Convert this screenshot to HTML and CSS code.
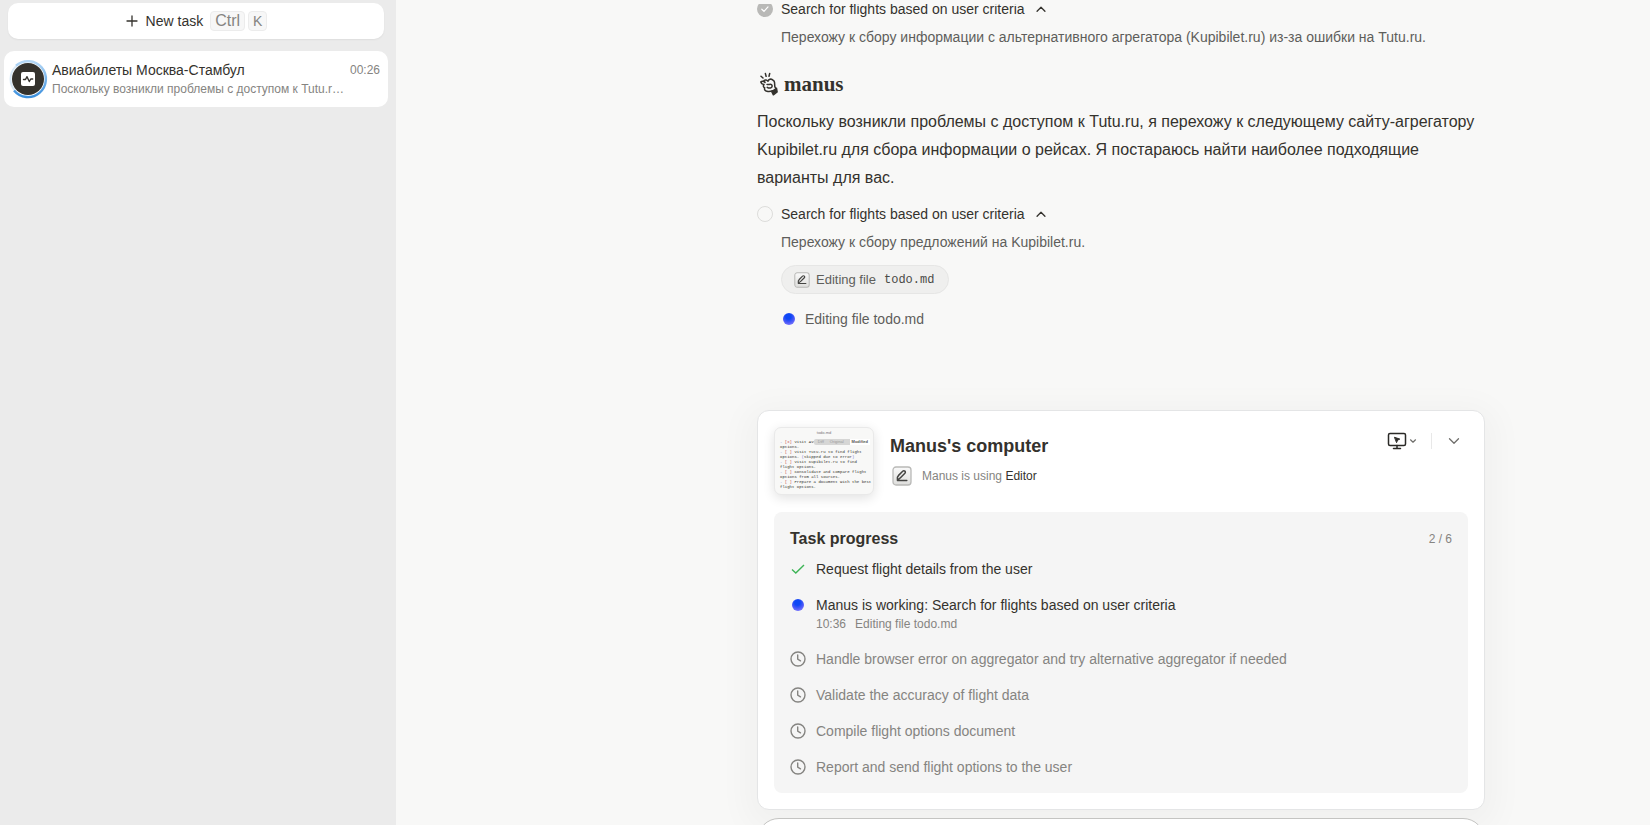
FILE: index.html
```html
<!DOCTYPE html>
<html lang="ru">
<head>
    <meta charset="UTF-8">
    <meta name="viewport" content="width=device-width, initial-scale=1.0">
    <title>Авиабилеты Москва-Стамбул - Manus</title>
    <link rel="stylesheet" href="styles.css">
</head>
<body>
    <!-- shared icons -->
    <svg class="sprite" aria-hidden="true">
        <symbol id="i-up" viewBox="0 0 16 16"><path d="M3.5 10.5 8 6l4.5 4.5" fill="none" stroke="currentColor" stroke-width="1.5" stroke-linecap="round" stroke-linejoin="round"/></symbol>
        <symbol id="i-down" viewBox="0 0 16 16"><path d="M3.5 5.8 8 10.3l4.5-4.5" fill="none" stroke="currentColor" stroke-width="1.3" stroke-linecap="round" stroke-linejoin="round"/></symbol>
        <symbol id="i-down-small" viewBox="0 0 8 8"><path d="M1.5 2.8 4 5.2l2.500-2.400" fill="none" stroke="currentColor" stroke-width="1.2" stroke-linecap="round" stroke-linejoin="round"/></symbol>
        <symbol id="i-clock" viewBox="0 0 16 16"><g fill="none" stroke="currentColor" stroke-width="1.4" stroke-linecap="round" stroke-linejoin="round"><circle cx="8" cy="8" r="7"/><path d="M7.700 4v4.200l2.800 1.600"/></g></symbol>
        <symbol id="i-edit" viewBox="0 0 20 20">
            <rect x="1" y="1" width="18" height="18" rx="3" fill="url(#edit-bg)" stroke="#b9b9b7" stroke-width="1.300"/>
            <path d="M5.400 13.600c-.5-1.800.1-3.200 1.400-4.500l3.900-3.900c.7-.7 1.600-.7 2.200-.1s.6 1.500 0 2.100l-4.200 4.300c-1 1-2.100 1.700-3.300 2.100zM5.400 14.400h9.400" fill="none" stroke="#454543" stroke-width="1.500" stroke-linecap="round" stroke-linejoin="round"/>
        </symbol>
        <linearGradient id="edit-bg" x1="0" y1="0" x2="0" y2="1"><stop offset="0" stop-color="#fafafa"/><stop offset="1" stop-color="#dededc"/></linearGradient>
    </svg>

    <div class="app">
        <aside class="sidebar">
            <button class="new-task" type="button">
                <svg width="14" height="14" viewBox="0 0 14 14"><path d="M7 2v10M2 7h10" stroke="#34322d" stroke-width="1.300" stroke-linecap="round"/></svg>
                <span>New task</span>
                <span class="keys"><kbd>Ctrl</kbd><kbd>K</kbd></span>
            </button>

            <a class="task" href="#">
                <svg class="task-avatar" viewBox="0 0 40 40">
                    <defs><linearGradient id="ring" x1="0" y1="0" x2="0" y2="1"><stop offset="0" stop-color="#b5d8f6"/><stop offset="1" stop-color="#3a8fdd"/></linearGradient></defs>
                    <circle cx="20" cy="20" r="17.500" fill="none" stroke="#d9e9f7" stroke-width="2"/>
                    <path d="M8 6.600A18 18 0 1 1 6 31.500" fill="none" stroke="url(#ring)" stroke-width="2.400"/>
                    <circle cx="20" cy="20" r="16" fill="#34322d"/>
                    <rect x="13" y="13" width="14" height="14" rx="2" fill="#fff"/>
                    <path d="M15.500 20.500h2l1.500-2.800 2.300 4.800 1.500-2.500h1.900" fill="none" stroke="#34322d" stroke-width="1.400" stroke-linecap="round" stroke-linejoin="round"/>
                </svg>
                <span class="task-body">
                    <span class="task-top"><span class="task-title">Авиабилеты Москва-Стамбул</span><time>00:26</time></span>
                    <span class="task-text">Поскольку возникли проблемы с доступом к Tutu.ru, я перехожу к следующему сайту-агрегатору</span>
                </span>
            </a>
        </aside>

        <main class="main">
            <section class="chat">
                <div class="step step-first">
                    <svg class="step-mark" viewBox="0 0 16 16"><circle cx="8" cy="8" r="8" fill="#b9b9b7"/><path d="M4.800 8.200 7 10.300l4-4.400" fill="none" stroke="#fff" stroke-width="1.200" stroke-linecap="round"/></svg>
                    <button class="step-title" type="button">Search for flights based on user criteria <svg width="14" height="14"><use href="#i-up"/></svg></button>
                </div>
                <p class="step-text">Перехожу к сбору информации с альтернативного агрегатора (Kupibilet.ru) из-за ошибки на Tutu.ru.</p>

                <div class="brand">
                    <svg width="20" height="24" viewBox="0 0 20 24" fill="none" stroke="#34322d" stroke-width="1.500" stroke-linecap="round" stroke-linejoin="round">
                        <path d="M2 4.200 4 6M6.400 1.600l.7 2.700M10.700 1.500l-.7 2.700"/>
                        <path d="M2 10c1-1.400 2.600-.8 4 .4L5 8.600c1.200-1.200 2.800-.6 4 .6.8-1.900 2.800-2.700 4.300-1.500l1.800 1.500c1 1.800.3 3.700.8 5.500.3 1 1.200 1.600 1.400 2.700"/>
                        <path d="M2 10c.2 1.600 1.400 2.300 3 2.600-1 1.200-.8 2.600.7 3-.6 2 .4 3.400 2.200 3.700 1.900.4 4 .2 5.600-.6"/>
                        <path d="M8 12.400c1.800.6 3.400-.8 4.600.4 1.100 1.300.4 2.900-1.100 3.200-1.300.2-2.400-.1-3.300-.7"/>
                        <path d="M17.500 16.300l.6 3.500-3.800 3-1.500-3.200z" fill="#34322d"/>
                    </svg>
                    <span>manus</span>
                </div>
                <p class="message">Поскольку возникли проблемы с доступом к Tutu.ru, я перехожу к следующему сайту-агрегатору Kupibilet.ru для сбора информации о рейсах. Я постараюсь найти наиболее подходящие варианты для вас.</p>

                <div class="step">
                    <svg class="step-mark" viewBox="0 0 16 16"><circle cx="8" cy="8" r="7.500" fill="none" stroke="#dcdcda"/></svg>
                    <button class="step-title" type="button">Search for flights based on user criteria <svg width="14" height="14"><use href="#i-up"/></svg></button>
                </div>
                <p class="step-text">Перехожу к сбору предложений на Kupibilet.ru.</p>
                <button class="tool" type="button">
                    <svg width="16" height="16"><use href="#i-edit"/></svg>
                    <span>Editing file</span>
                    <code>todo.md</code>
                </button>
                <div class="status"><i class="dot"></i><span>Editing file todo.md</span></div>
            </section>

            <section class="computer">
                <header class="computer-head">
                    <div class="thumb">
                        <div class="thumb-name">todo.md</div>
                        <div class="thumb-tabs"><span>Diff</span><span>Original</span><b>Modified</b></div>
                        <pre><i>-</i> <em>[x]</em> Visit Aviasales
options.
<i>-</i> <em>[ ]</em> Visit Tutu.ru to find flight
options. <i>(</i>Skipped due to error<i>)</i>
<i>-</i> <em>[ ]</em> Visit Kupibilet.ru to find
flight options.
<i>-</i> <em>[ ]</em> Consolidate and compare flight
options from all sources.
<i>-</i> <em>[ ]</em> Prepare a document with the best
flight options.</pre>
                    </div>
                    <div class="computer-info">
                        <h2>Manus's computer</h2>
                        <div class="using"><svg width="20" height="20"><use href="#i-edit"/></svg><span>Manus is using <b>Editor</b></span></div>
                    </div>
                    <div class="computer-actions">
                        <button class="takeover" type="button" aria-label="View">
                            <svg width="20" height="20" viewBox="0 0 20 20" fill="none" stroke="#2b2a27" stroke-width="1.500" stroke-linecap="round" stroke-linejoin="round"><rect x="1.500" y="2.500" width="17" height="12" rx="1.500"/><path d="M10 14.500v3M6.500 17.500h7"/><path d="M7.800 6.400l5 1.700-2.200 1-.9 2.200z" fill="#2b2a27" stroke-width="1"/></svg>
                            <svg width="8" height="8"><use href="#i-down-small"/></svg>
                        </button>
                        <span class="divider"></span>
                        <button type="button" aria-label="Collapse"><svg width="16" height="16"><use href="#i-down"/></svg></button>
                    </div>
                </header>

                <div class="progress">
                    <div class="progress-head"><h3>Task progress</h3><span>2 / 6</span></div>
                    <ul>
                        <li class="done"><svg width="16" height="16" viewBox="0 0 16 16"><path d="M2 8.600 5.800 12 14 4" fill="none" stroke="#3db456" stroke-width="1.400"/></svg>Request flight details from the user</li>
                        <li class="active"><i class="dot"></i><div>Manus is working: Search for flights based on user criteria<small><time>10:36</time>Editing file todo.md</small></div></li>
                        <li><svg width="16" height="16"><use href="#i-clock"/></svg>Handle browser error on aggregator and try alternative aggregator if needed</li>
                        <li><svg width="16" height="16"><use href="#i-clock"/></svg>Validate the accuracy of flight data</li>
                        <li><svg width="16" height="16"><use href="#i-clock"/></svg>Compile flight options document</li>
                        <li><svg width="16" height="16"><use href="#i-clock"/></svg>Report and send flight options to the user</li>
                    </ul>
                </div>
            </section>

            <textarea class="composer" aria-label="Message"></textarea>
        </main>
    </div>
</body>
</html>
```
FILE: styles.css
```css
* {
    box-sizing: border-box;
}
body {
    margin: 0;
    font-family: "Liberation Sans", Arial, sans-serif;
    font-size: 14px;
    line-height: 20px;
    color: #34322d;
    background: #f8f8f7;
}
h2, h3, p, ul, pre {
    margin: 0;
    padding: 0;
}
button {
    font: inherit;
    color: inherit;
    background: none;
    border: none;
    padding: 0;
    cursor: pointer;
}
svg {
    flex-shrink: 0;
    display: block;
}
.sprite {
    position: absolute;
    width: 0;
    height: 0;
}
.app {
    display: flex;
    height: 100vh;
    overflow: hidden;
}

/* sidebar */
.sidebar {
    width: 24%;
    padding: 3px 8px 0 4px;
    background: #ebebeb;
}
.new-task {
    display: flex;
    align-items: center;
    justify-content: center;
    gap: 7px;
    width: calc(100% - 8px);
    height: 36px;
    margin: 0 4px 12px;
    background: #fff;
    border-radius: 10px;
    box-shadow: 0 1px 2px rgba(0, 0, 0, 0.06);
}
.keys {
    display: flex;
    gap: 3px;
}
kbd {
    padding: 0 4px;
    font-family: inherit;
    line-height: 18px;
    color: #858481;
    background: #f7f7f7;
    border: 1px solid #ececec;
    border-radius: 4px;
}
kbd:first-child {
    font-size: 16px;
}
.task {
    display: flex;
    align-items: center;
    gap: 4px;
    height: 56px;
    padding: 0 8px 0 4px;
    color: inherit;
    text-decoration: none;
    background: #fff;
    border-radius: 10px;
}
.task-avatar {
    width: 40px;
    height: 40px;
}
.task-body {
    flex: 1;
    min-width: 0;
}
.task-top {
    display: flex;
    justify-content: space-between;
}
.task-top time,
.task-text {
    font-size: 12px;
    color: #858481;
}
.task-text {
    display: block;
    padding-right: 32px;
    line-height: 18px;
    overflow: hidden;
    white-space: nowrap;
    text-overflow: ellipsis;
}

/* chat */
.main {
    flex: 1;
    display: grid;
    grid-template-columns: 361fr minmax(0, 728px) 165fr;
    grid-template-rows: 386px auto auto;
    align-content: start;
    padding-top: 4px;
}
.main > * {
    grid-column: 2;
}
.chat {
    overflow: hidden;
}
.step {
    display: flex;
    align-items: center;
    gap: 8px;
    height: 20px;
}
.step-first {
    margin-top: -5px;
}
.step-mark {
    width: 16px;
    height: 16px;
}
.step-title {
    display: flex;
    align-items: center;
    gap: 9px;
}
.step-text {
    margin: 6px 0 0 24px;
    line-height: 24px;
    color: #5e5e5b;
}
.brand {
    display: flex;
    align-items: center;
    gap: 5px;
    height: 28px;
    margin: 21px 0 10px 2px;
    font-family: "Liberation Serif", "Times New Roman", serif;
    font-size: 21px;
    font-weight: bold;
}
.message {
    margin-bottom: 12px;
    font-size: 16px;
    line-height: 28px;
}
.tool {
    display: flex;
    align-items: center;
    gap: 6px;
    height: 29px;
    margin: 11px 0 0 24px;
    padding: 0 14px 0 12px;
    font-size: 13px;
    color: #5e5e5b;
    background: #efefee;
    border: 1px solid #e6e6e5;
    border-radius: 15px;
}
.tool code {
    margin-left: 2px;
    font-family: "Liberation Mono", monospace;
    font-size: 12px;
    color: #4a4a47;
}
.dot {
    flex-shrink: 0;
    width: 12px;
    height: 12px;
    margin: 2px;
    border-radius: 50%;
    background: radial-gradient(circle at 45% 30%, #0d47f5 25%, #4a58f8 55%, #9b8cff);
}
.status {
    display: flex;
    align-items: center;
    gap: 8px;
    margin: 15px 0 0 24px;
    color: #5e5e5b;
}

/* computer card */
.computer {
    margin-top: 20px;
    padding: 16px;
    background: #fff;
    border: 1px solid #e4e5e6;
    border-radius: 12px;
    box-shadow: 0 8px 32px 12px rgba(0, 0, 0, 0.03);
}
.computer-head {
    display: flex;
    gap: 16px;
    height: 68px;
}
.thumb {
    position: relative;
    width: 100px;
    height: 68px;
    overflow: hidden;
    padding: 2px 5px;
    background: #f8f8f7;
    border: 1px solid #e9e9e9;
    border-radius: 7px;
    box-shadow: 0 3px 12px rgba(0, 0, 0, 0.12);
}
.thumb-name {
    font-size: 4px;
    line-height: 6px;
    text-align: center;
    color: #777;
}
.thumb pre {
    margin-top: 4px;
    font-family: "Liberation Mono", monospace;
    font-size: 4px;
    line-height: 5px;
}
.thumb i {
    font-style: normal;
    color: #6b74d8;
}
.thumb em {
    font-style: normal;
    color: #c24a4a;
}
.thumb-tabs {
    position: absolute;
    top: 11px;
    right: 3px;
    display: flex;
    gap: 6px;
    padding-left: 4px;
    font-size: 4px;
    line-height: 6px;
    color: #999;
    background: #d6d6d5;
    border-radius: 2px;
}
.thumb-tabs b {
    padding: 0 2px;
    color: #555;
    background: #fff;
}
.computer-info {
    flex: 1;
}
h2 {
    margin-top: 7px;
    font-size: 18px;
    line-height: 24px;
}
.using {
    display: flex;
    align-items: center;
    gap: 10px;
    margin: 8px 0 0 2px;
    font-size: 12px;
    color: #858481;
}
.using b {
    font-weight: normal;
    color: #34322d;
}
.computer-actions {
    display: flex;
    align-items: center;
    gap: 14px;
    height: 28px;
    padding-right: 6px;
    color: #6f6e6b;
}
.takeover {
    display: flex;
    align-items: center;
    gap: 2px;
}
.divider {
    width: 1px;
    height: 16px;
    background: #e8e8e8;
}

/* task progress */
.progress {
    margin-top: 17px;
    padding: 16px 16px 8px;
    background: #f5f5f5;
    border-radius: 8px;
}
.progress-head {
    display: flex;
    align-items: center;
    justify-content: space-between;
    font-size: 12px;
    color: #858481;
}
h3 {
    font-size: 16px;
    line-height: 22px;
    color: #34322d;
}
ul {
    padding-top: 1px;
    list-style: none;
}
li {
    display: flex;
    align-items: center;
    gap: 10px;
    padding: 8px 0;
    color: #858481;
}
.done,
.active {
    color: #34322d;
}
.active {
    align-items: flex-start;
}
.active .dot {
    margin-top: 4px;
}
small {
    display: flex;
    gap: 9px;
    font-size: 12px;
    line-height: 18px;
    color: #858481;
}

.composer {
    width: 100%;
    height: 80px;
    margin-top: 8px;
    border: 1px solid #c4c4c2;
    border-radius: 22px;
    background: #fff;
    resize: none;
}
```
